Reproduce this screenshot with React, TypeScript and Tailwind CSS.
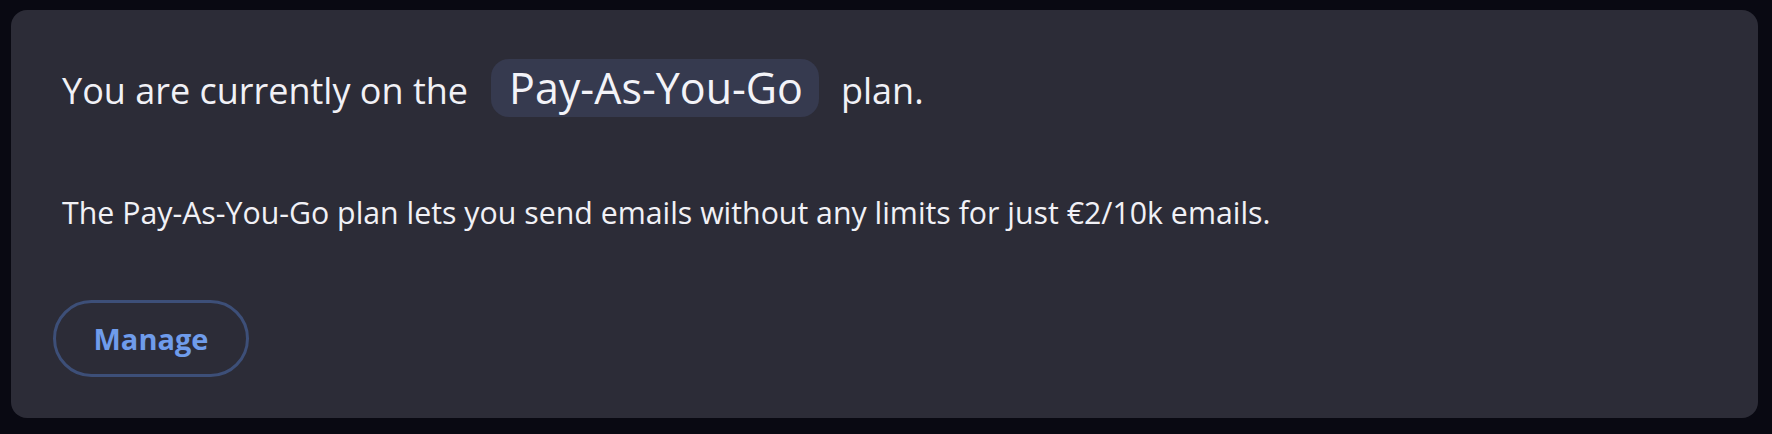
import React from "react";

export default function App() {
  return (
    <div
      className="w-[1772px] h-[434px] bg-[#090912] pt-[10px] pl-[11px]"
      style={{ fontFamily: '"Open Sans", "Noto Sans", sans-serif' }}
    >
      <div className="w-[1747px] h-[408px] rounded-[16px] bg-[#2c2c37] pl-[42px] pt-[49px] flex flex-col">
        <div className="flex items-center pl-[9px] h-[58px] text-[36px] text-[#f1f1f6]">
          <span className="mt-[5px]">You are currently on the</span>
          <span className="ml-[23px] h-[58px] flex items-center rounded-[18px] bg-[#363a4f] pl-[18px] pr-[16px] text-[43px] text-[#f3f3f8]">
            Pay-As-You-Go
          </span>
          <span className="ml-[22px] mt-[5px]">plan.</span>
        </div>
        <p className="pl-[9px] mt-[76px] text-[30.3px] leading-[40px] text-[#f1f1f6]">
          The Pay-As-You-Go plan lets you send emails without any limits for just €2/10k emails.
        </p>
        <div className="mt-[67px]">
          <button className="w-[196px] h-[77px] rounded-full border-[3px] border-[#3d4f78] text-[29px] font-bold text-[#6f9ceb]">
            Manage
          </button>
        </div>
      </div>
    </div>
  );
}
